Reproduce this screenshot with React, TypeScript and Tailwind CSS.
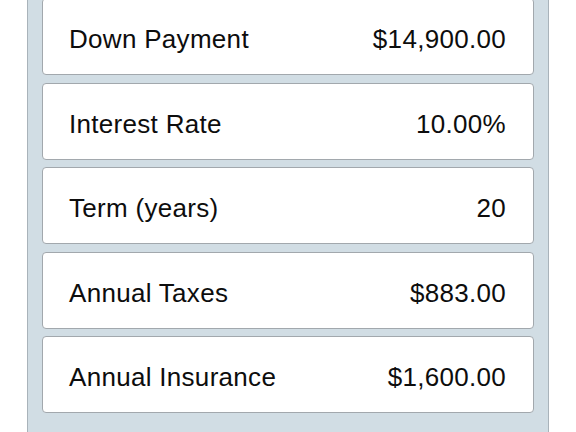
const rows = [
  { label: "Down Payment", value: "$14,900.00" },
  { label: "Interest Rate", value: "10.00%" },
  { label: "Term (years)", value: "20" },
  { label: "Annual Taxes", value: "$883.00" },
  { label: "Annual Insurance", value: "$1,600.00" },
];

export default function App() {
  return (
    <div className="h-[432px] w-[576px] overflow-hidden bg-white font-['Liberation_Sans',Arial,sans-serif]">
      <div className="ml-[27px] h-[440px] w-[522px] border-x-[1.5px] border-[#a9b3ba] bg-[#d1dde4] px-[14px]">
        <div className="-mt-[2px] flex flex-col gap-[7.5px]">
          {rows.map((r) => (
            <div
              key={r.label}
              className="flex h-[77px] items-center justify-between rounded-[4px] border border-[#a2a8ad] bg-white pl-[26px] pr-[27px] pt-[6px] text-[26px] tracking-[0.3px] text-[#0d0d0d]"
            >
              <span>{r.label}</span>
              <span>{r.value}</span>
            </div>
          ))}
        </div>
      </div>
    </div>
  );
}
